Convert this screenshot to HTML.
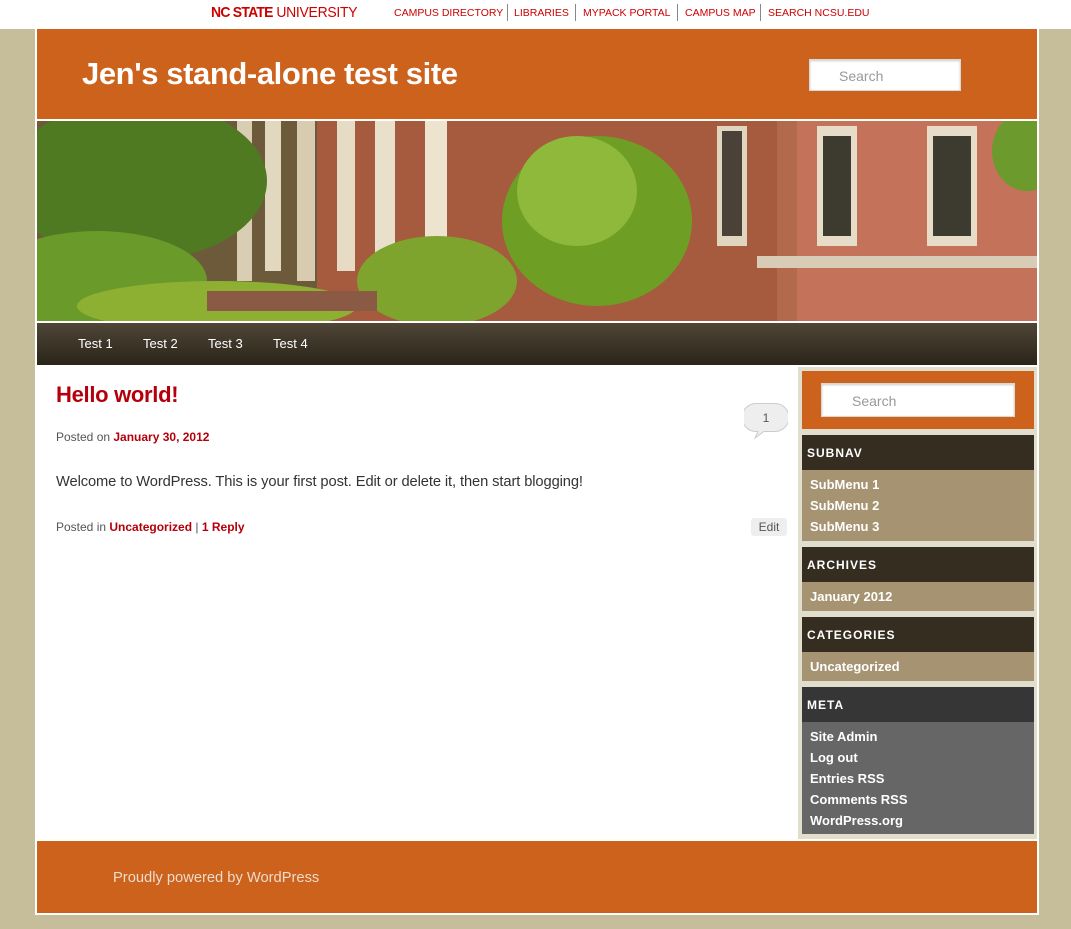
<!DOCTYPE html>
<html><head><meta charset="utf-8"><style>
*{margin:0;padding:0;box-sizing:border-box}
body{width:1071px;height:929px;background:#c6bd9b;font-family:"Liberation Sans",Arial,sans-serif;position:relative;overflow:hidden}
.a{position:absolute}
#top{left:0;top:0;width:1071px;height:29px;background:#fff}
.ncs{left:211px;top:4px;font-size:15px;color:#cc0000;letter-spacing:-0.3px;transform:scaleX(0.93);transform-origin:left}
.links{top:6px;font-size:10.5px;color:#cc0000;line-height:14px}
.sep{top:4px;width:1px;height:17px;background:#888}
#wrap{left:35px;top:29px;width:1004px;height:886px;background:#fff}
#hdr{left:37px;top:29px;width:1000px;height:90px;background:#cc621c}
.srch{background:#fff;border:1px solid #d8d8d8;box-shadow:inset 0 1px 2px #ccc;color:#999;font-size:14px}
#nav{left:37px;top:323px;width:1000px;height:42px;background:linear-gradient(#4f4637,#2a2419)}
.ni{top:336px;color:#fff;font-size:13px}
#side{left:798px;top:367px;width:239px;height:472px;background:#e2dece}
.wh{left:802px;width:232px;height:35px;background:#342d20;color:#fff;font-weight:bold;font-size:12px;letter-spacing:1px;padding:11px 0 0 5px}
.wb{left:802px;width:232px;background:#a69372;color:#fff;font-weight:bold;font-size:13px;padding:4px 0 0 8px;line-height:21px}
#ftr{left:37px;top:841px;width:1000px;height:72px;background:#cc621c}
.red{color:#b5000b;font-weight:bold}
.gr{color:#555;font-size:12px}
</style></head><body>
<div class="a" id="top"></div>
<div class="a ncs"><b style="letter-spacing:-0.8px">NC STATE</b> UNIVERSITY</div>
<div class="a links" style="left:394px">CAMPUS DIRECTORY</div>
<div class="a sep" style="left:507px"></div>
<div class="a links" style="left:514px">LIBRARIES</div>
<div class="a sep" style="left:575px"></div>
<div class="a links" style="left:583px">MYPACK PORTAL</div>
<div class="a sep" style="left:677px"></div>
<div class="a links" style="left:685px">CAMPUS MAP</div>
<div class="a sep" style="left:760px"></div>
<div class="a links" style="left:768px">SEARCH NCSU.EDU</div>

<div class="a" id="wrap"></div>
<div class="a" id="hdr"></div>
<div class="a" style="left:82px;top:56px;font-size:31px;color:#fff;font-weight:bold;letter-spacing:-0.4px">Jen's stand-alone test site</div>
<div class="a srch" style="left:809px;top:59px;width:152px;height:32px;padding:8px 0 0 29px">Search</div>

<svg class="a" style="left:37px;top:121px" width="1000" height="200" viewBox="0 0 1000 200">
<rect width="1000" height="200" fill="#b36a4c"/>
<rect x="0" width="300" height="200" fill="#6d5a3a"/>
<rect x="280" width="460" height="200" fill="#a65a3e"/>
<rect x="760" width="240" height="200" fill="#c4735a"/>
<rect x="200" y="0" width="15" height="160" fill="#d9cdb4"/>
<rect x="228" y="0" width="16" height="150" fill="#e2d8c0"/>
<rect x="260" y="0" width="18" height="160" fill="#d8cbb0"/>
<rect x="300" y="0" width="18" height="150" fill="#e6dcc6"/>
<rect x="338" y="0" width="20" height="150" fill="#e9e0cc"/>
<rect x="388" y="0" width="22" height="130" fill="#ede4d0"/>
<rect x="780" y="5" width="40" height="120" fill="#e6dcc8"/><rect x="786" y="15" width="28" height="100" fill="#3d3a30"/>
<rect x="890" y="5" width="50" height="120" fill="#e6dcc8"/><rect x="896" y="15" width="38" height="100" fill="#3d3a30"/>
<rect x="680" y="5" width="30" height="120" fill="#e0d6c0"/><rect x="685" y="10" width="20" height="105" fill="#4a4238"/>
<rect x="720" y="135" width="280" height="12" fill="#d8ccb6"/>
<ellipse cx="100" cy="60" rx="130" ry="80" fill="#4f7a22"/>
<ellipse cx="60" cy="160" rx="110" ry="50" fill="#6a9a2a"/>
<ellipse cx="180" cy="185" rx="140" ry="25" fill="#8eb032"/>
<ellipse cx="560" cy="100" rx="95" ry="85" fill="#6f9e24"/>
<ellipse cx="540" cy="70" rx="60" ry="55" fill="#8fb93a"/>
<ellipse cx="400" cy="160" rx="80" ry="45" fill="#7ea42e"/>
<ellipse cx="990" cy="30" rx="35" ry="40" fill="#6c9a2c"/>
<rect x="170" y="170" width="170" height="20" fill="#8a5a44"/>
</svg>

<div class="a" id="nav"></div>
<div class="a ni" style="left:78px">Test 1</div>
<div class="a ni" style="left:143px">Test 2</div>
<div class="a ni" style="left:208px">Test 3</div>
<div class="a ni" style="left:273px">Test 4</div>

<div class="a red" style="left:56px;top:382px;font-size:22px;letter-spacing:-0.3px">Hello world!</div>
<div class="a gr" style="left:56px;top:430px">Posted on <span class="red">January 30, 2012</span></div>
<div class="a" style="left:56px;top:474px;font-size:14.7px;color:#333;letter-spacing:-0.1px">Welcome to WordPress. This is your first post. Edit or delete it, then start blogging!</div>
<div class="a gr" style="left:56px;top:520px">Posted in <span class="red">Uncategorized</span> | <span class="red">1 Reply</span></div>
<svg class="a" style="left:744px;top:403px" width="44" height="36"><path d="M12 0.5 H31 A12 12 0 0 1 31 28.5 H20 L11 35 L14 28.5 H12 A12 12 0 0 1 12 0.5Z" fill="#eee" stroke="#ccc"/><text x="22" y="19" font-size="12" fill="#555" text-anchor="middle" font-family="Liberation Sans">1</text></svg>
<div class="a" style="left:751px;top:518px;width:36px;height:18px;background:#eee;border-radius:3px;color:#555;font-size:12px;text-align:center;line-height:18px">Edit</div>

<div class="a" id="side"></div>
<div class="a" style="left:802px;top:371px;width:232px;height:58px;background:#cc621c"></div>
<div class="a srch" style="left:821px;top:383px;width:194px;height:34px;padding:9px 0 0 30px">Search</div>
<div class="a wh" style="top:435px">SUBNAV</div>
<div class="a wb" style="top:470px;height:71px">SubMenu 1<br>SubMenu 2<br>SubMenu 3</div>
<div class="a wh" style="top:547px">ARCHIVES</div>
<div class="a wb" style="top:582px;height:29px">January 2012</div>
<div class="a wh" style="top:617px">CATEGORIES</div>
<div class="a wb" style="top:652px;height:29px">Uncategorized</div>
<div class="a wh" style="top:687px;background:#363636">META</div>
<div class="a wb" style="top:722px;height:112px;background:#666">Site Admin<br>Log out<br>Entries RSS<br>Comments RSS<br>WordPress.org</div>

<div class="a" id="ftr"></div>
<div class="a" style="left:113px;top:870px;color:#eedccc;font-size:14.7px">Proudly powered by WordPress</div>
</body></html>
